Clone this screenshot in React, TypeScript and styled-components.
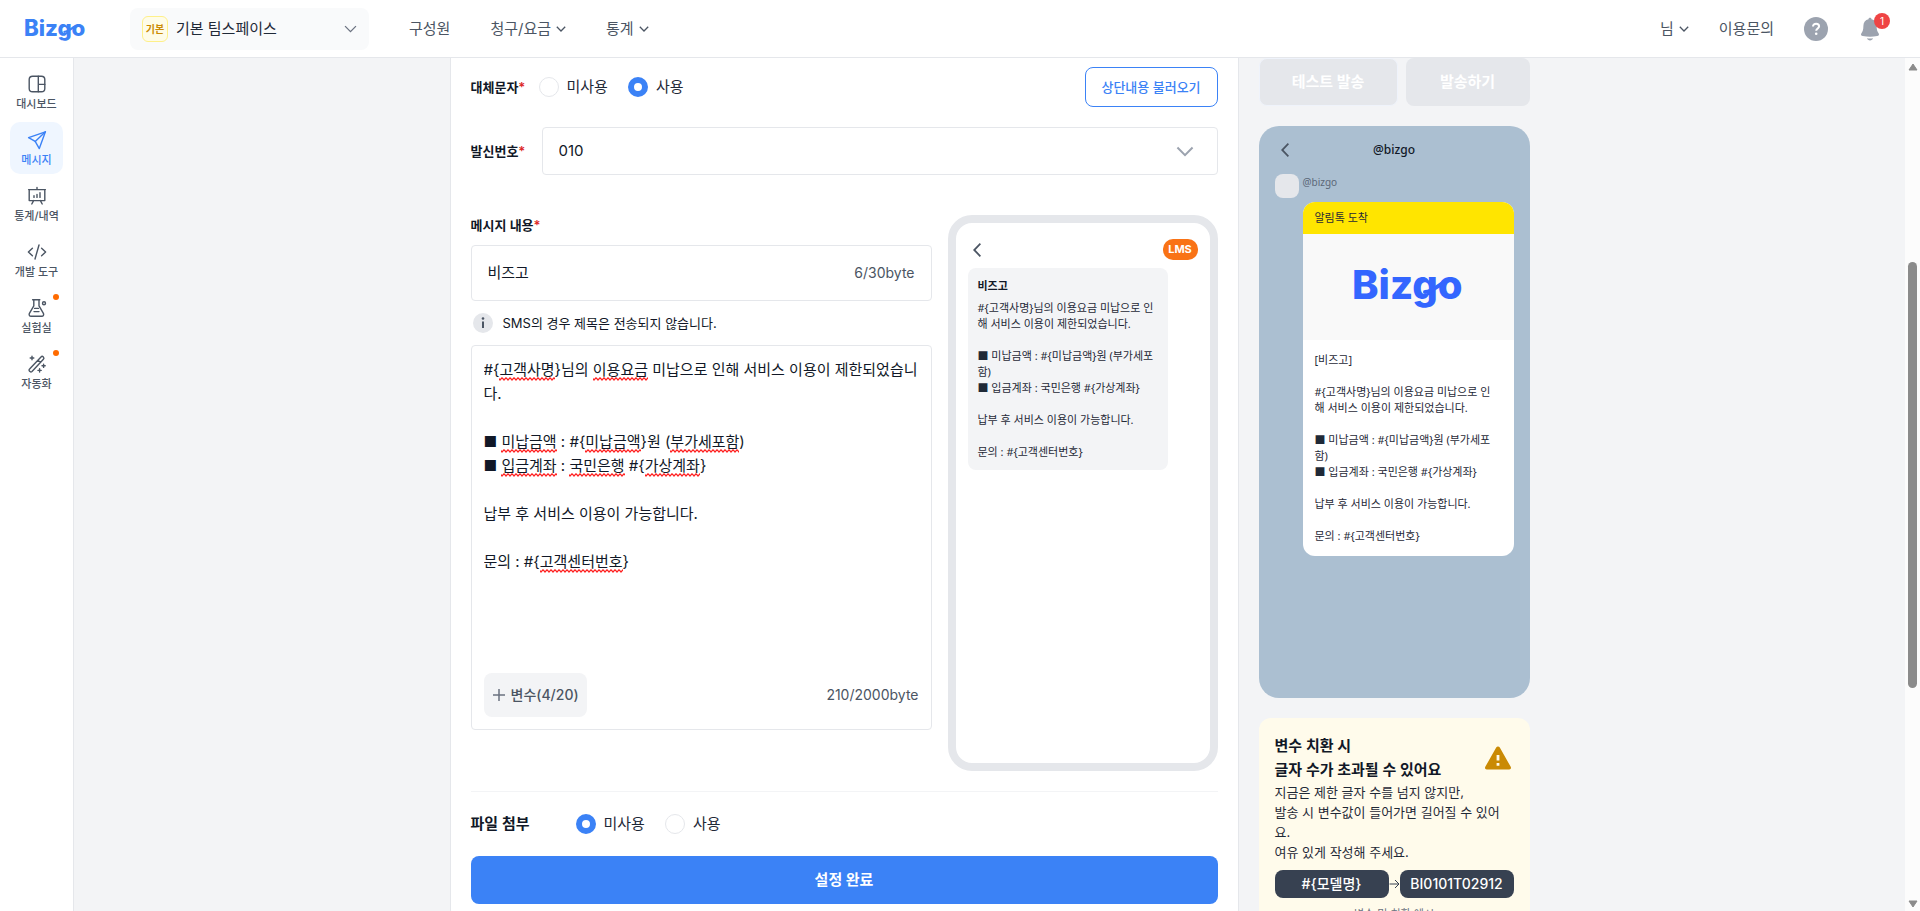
import React, { useState } from 'react';
import styled, { createGlobalStyle, css } from 'styled-components';

const sans = `Inter, "Noto Sans CJK KR", sans-serif`;
const preview = `"Noto Sans", "Noto Sans CJK KR", sans-serif`;

const GlobalStyle = createGlobalStyle`
  *, *::before, *::after { box-sizing: border-box; }
  body { margin: 0; background: #fff; color: #111827; font-family: ${sans}; font-size: 15px; line-height: 24px; }
  button, input, select, textarea { font: inherit; color: inherit; margin: 0; }
  button { cursor: pointer; }
  a { color: inherit; text-decoration: none; }
  p, h2 { margin: 0; }
  svg { display: block; flex: none; }
`;

const Shell = styled.div`
  display: flex;
  flex-direction: column;
  height: 100vh;
  overflow: hidden;
`;

const Header = styled.header`
  display: flex;
  align-items: center;
  flex: none;
  height: 58px;
  padding: 0 38px 0 24px;
  border-bottom: 1px solid #e5e7eb;
  background: #fff;
  color: #4b5563;
`;

const TeamButton = styled.button`
  display: flex;
  align-items: center;
  gap: 8px;
  width: 239px;
  height: 42px;
  margin-left: 44px;
  padding: 0 12px;
  border: 0;
  border-radius: 8px;
  background: #f9fafb;
  color: #1f2937;
  text-align: left;
`;

const TeamName = styled.span`
  flex: 1;
`;

const TeamBadge = styled.span`
  width: 26px;
  height: 26px;
  border: 1px solid #fef08a;
  border-radius: 6px;
  background: #fefce8;
  color: #ca8a04;
  font-size: 10px;
  font-weight: 700;
  line-height: 24px;
  text-align: center;
`;

const Nav = styled.nav`
  display: flex;
  align-items: center;
  gap: 40px;
  flex: 1;
  margin-left: 40px;
`;

const NavLink = styled.a`
  display: flex;
  align-items: center;
  gap: 5px;
`;

const Tools = styled.div`
  display: flex;
  align-items: center;
  gap: 30px;
`;

const IconButton = styled.button`
  position: relative;
  padding: 0;
  border: 0;
  background: none;
`;

const Count = styled.span`
  position: absolute;
  top: -4px;
  right: -8px;
  width: 16px;
  height: 16px;
  border-radius: 8px;
  background: #ef4444;
  color: #fff;
  font-size: 10px;
  line-height: 16px;
  text-align: center;
`;

const Body = styled.div`
  display: flex;
  flex: 1;
  min-height: 0;
`;

const Sidebar = styled.nav`
  display: flex;
  flex-direction: column;
  gap: 4px;
  flex: none;
  width: 74px;
  padding: 8px 10px;
  border-right: 1px solid #e5e7eb;
`;

const SideItem = styled.a<{ $active?: boolean }>`
  position: relative;
  display: flex;
  flex-direction: column;
  align-items: center;
  height: 52px;
  padding-top: 8px;
  border-radius: 10px;
  background: ${(p) => (p.$active ? '#eff6ff' : 'transparent')};
  color: ${(p) => (p.$active ? '#3b82f6' : '#4b5563')};
  font-size: 11px;
  font-weight: 500;
  line-height: 20px;
  white-space: nowrap;
`;

const Dot = styled.span`
  position: absolute;
  top: 4px;
  right: 4px;
  width: 6px;
  height: 6px;
  border-radius: 50%;
  background: #ff6b00;
`;

const Main = styled.main`
  flex: 1;
  min-width: 0;
  overflow: hidden;
  background: #f3f4f6;
`;

const Columns = styled.div`
  display: flex;
  align-items: flex-start;
  gap: 20px;
  max-width: 1080px;
  margin: 0 auto;
`;

const FormCard = styled.form`
  flex: 1;
  min-width: 0;
  padding: 9px 20px 20px;
  border: 1px solid #e5e7eb;
  border-top: 0;
  border-radius: 0 0 16px 16px;
  background: #fff;
`;

const Row = styled.div`
  display: flex;
  align-items: center;
`;

const Label = styled.label`
  color: #111827;
  font-size: 13px;
  font-weight: 600;
  line-height: 20px;
`;

const FieldName = styled(Label).attrs({ as: 'span' })`
  width: 68px;
`;

const SectionName = styled(Label).attrs({ as: 'span' })`
  width: 105px;
  font-size: 15px;
`;

const Required = styled.span`
  color: #dc2626;
`;

const RadioGroup = styled.div`
  display: flex;
  gap: 20px;
  flex: 1;
`;

const RadioLabel = styled.label`
  display: flex;
  align-items: center;
  gap: 8px;
  color: #1f2937;
`;

const Radio = styled.input.attrs({ type: 'radio' })`
  appearance: none;
  width: 20px;
  height: 20px;
  border: 1px solid #e5e7eb;
  border-radius: 50%;
  background: #fff;

  &:checked {
    border: 6px solid #3b82f6;
  }
`;

const OutlineButton = styled.button`
  width: 133px;
  height: 40px;
  padding: 0;
  border: 1px solid #3b82f6;
  border-radius: 8px;
  background: #fff;
  color: #3b82f6;
  font-size: 13px;
  font-weight: 500;
`;

const SenderRow = styled(Row)`
  margin-top: 20px;
`;

const SenderLabel = styled(Label)`
  width: 71px;
`;

const SelectBox = styled.div`
  display: grid;
  flex: 1;
  align-items: center;

  > * {
    grid-area: 1 / 1;
  }
  > svg {
    justify-self: end;
    margin-right: 24px;
    pointer-events: none;
  }
`;

const Select = styled.select`
  appearance: none;
  width: 100%;
  height: 48px;
  padding: 0 16px;
  border: 1px solid #e5e7eb;
  border-radius: 4px;
  background: #fff;
  font-size: 15px;
`;

const MessageArea = styled.div`
  display: flex;
  align-items: flex-start;
  gap: 16px;
  margin-top: 40px;
`;

const MessageFields = styled.div`
  display: flex;
  flex-direction: column;
  flex: 1;
  min-width: 0;
`;

const fieldBox = css`
  border: 1px solid #e5e7eb;
  border-radius: 4px;
  background: #fff;
`;

const TitleBox = styled.div`
  ${fieldBox}
  display: flex;
  align-items: center;
  height: 56px;
  margin-top: 10px;
  padding: 0 16px;
`;

const TitleInput = styled.input`
  flex: 1;
  min-width: 0;
  padding: 0;
  border: 0;
  outline: 0;
  background: none;
`;

const Bytes = styled.span`
  color: #4b5563;
  font-size: 14px;
`;

const Hint = styled.p`
  display: flex;
  align-items: center;
  gap: 10px;
  margin: 12px 0 12px 2px;
  font-size: 13px;
  line-height: 20px;
`;

const ContentBox = styled.div`
  ${fieldBox}
  display: flex;
  flex-direction: column;
  height: 385px;
  padding: 12px;
`;

const Editor = styled.div`
  display: grid;
  flex: 1;
  min-height: 0;

  > * {
    grid-area: 1 / 1;
  }
`;

const editorText = css`
  width: 100%;
  padding: 0;
  font-family: ${sans};
  font-size: 15px;
  line-height: 24px;
  white-space: pre-wrap;
  word-break: break-all;
`;

/* Hidden copy of the text that only carries the spelling marks under the textarea. */
const SpellingLayer = styled.div`
  ${editorText}
  visibility: hidden;
`;

const Misspelled = styled.span`
  position: relative;

  &::after {
    content: '';
    visibility: visible;
    position: absolute;
    left: 0;
    right: 0;
    bottom: -2px;
    height: 4px;
    background: url("data:image/svg+xml,%3Csvg xmlns='http://www.w3.org/2000/svg' width='4' height='4'%3E%3Cpath d='M-1 .5 1 3 3 .8 5 3' fill='none' stroke='%23ff2020' stroke-width='1.2'/%3E%3C/svg%3E") repeat-x;
  }
`;

const EditorInput = styled.textarea`
  ${editorText}
  position: relative;
  height: 100%;
  border: 0;
  outline: 0;
  resize: none;
  overflow: hidden;
  background: none;
`;

const ContentFooter = styled.div`
  display: flex;
  align-items: center;
  justify-content: space-between;
`;

const VariableButton = styled.button`
  display: flex;
  align-items: center;
  gap: 5px;
  height: 44px;
  padding: 0 8px;
  border: 0;
  border-radius: 8px;
  background: #f3f4f6;
  color: #4b5563;
  font-size: 14px;
  font-weight: 500;
`;

const LmsPhone = styled.section`
  flex: none;
  width: 270px;
  height: 556px;
  padding: 16px 12px;
  border: 8px solid #e5e7eb;
  border-radius: 24px;
  background: #fff;
`;

const LmsHead = styled.div`
  display: flex;
  align-items: center;
  justify-content: space-between;
  padding-left: 5px;
`;

const LmsTag = styled.span`
  width: 35px;
  height: 21px;
  border-radius: 10px;
  background: #f97316;
  color: #fff;
  font-size: 11px;
  font-weight: 700;
  line-height: 20px;
  text-align: center;
`;

const LmsBubble = styled.div`
  width: 200px;
  margin-top: 8px;
  padding: 10px;
  border-radius: 8px;
  background: #f3f4f6;
  color: #1f2937;
`;

const LmsTitle = styled.h2`
  margin-bottom: 6px;
  color: #111827;
  font-family: ${preview};
  font-size: 11px;
  font-weight: 600;
  line-height: 16px;
`;

const PreviewText = styled.p`
  font-family: ${preview};
  font-size: 11px;
  line-height: 16px;
  white-space: pre;
`;

const Divider = styled.hr`
  height: 1px;
  margin: 20px 0;
  border: 0;
  background: #f3f4f6;
`;

const SubmitButton = styled.button`
  width: 100%;
  height: 48px;
  margin-top: 20px;
  border: 0;
  border-radius: 8px;
  background: #3b82f6;
  color: #fff;
  font-weight: 700;
`;

const Side = styled.aside`
  display: flex;
  flex-direction: column;
  gap: 20px;
  flex: none;
  width: 271px;
`;

const SendButtons = styled.div`
  display: flex;
  gap: 8px;
`;

const SendButton = styled.button<{ $framed?: boolean }>`
  flex: ${(p) => (p.$framed ? '0 0 139px' : '1')};
  height: 48px;
  padding: 0;
  border: ${(p) => (p.$framed ? '1px solid #eff3fb' : '0')};
  border-radius: 8px;
  background: #e5e7eb;
  color: #fff;
  font-weight: 700;
`;

const TalkPhone = styled.section`
  height: 572px;
  padding: 16px;
  border-radius: 20px;
  background: #abbfd1;
  font-family: ${preview};
`;

const TalkHead = styled.div`
  display: grid;
  grid-template-columns: 20px 1fr 20px;
  align-items: center;
  justify-items: center;
  height: 16px;
  margin-bottom: 16px;
  font-size: 12px;
  font-weight: 500;
  line-height: 16px;
`;

const TalkBody = styled.div`
  display: grid;
  grid-template-columns: 24px 1fr;
  column-gap: 4px;
`;

const Avatar = styled.span`
  height: 24px;
  border-radius: 8px;
  background: #e5e7eb;
`;

const TalkName = styled.span`
  height: 28px;
  color: #5b6878;
  font-size: 10px;
  line-height: 16px;
`;

const TalkBubble = styled.div`
  grid-column: 2;
  border-radius: 12px;
  overflow: hidden;
  background: #fff;
  color: #1f2937;
`;

const TalkNotice = styled.p`
  padding: 0 12px;
  background: #ffe500;
  font-size: 11px;
  line-height: 32px;
`;

const TalkImage = styled.div`
  display: flex;
  align-items: center;
  justify-content: center;
  height: 106px;
  background: #f9f9f9;
`;

const TalkText = styled(PreviewText)`
  padding: 12px;
`;

const Tip = styled.section`
  padding: 16px;
  border-radius: 12px;
  background: #fffbeb;
  font-size: 13px;
  line-height: 20px;
  color: #1f2937;
`;

const TipHead = styled.div`
  display: flex;
  align-items: center;
  justify-content: space-between;
  padding-right: 2px;
`;

const TipTitle = styled.h2`
  color: #111827;
  font-size: 15px;
  font-weight: 600;
  line-height: 24px;
`;

const Example = styled.div`
  display: flex;
  align-items: center;
  margin-top: 8px;
  color: #374151;
`;

const Pill = styled.span`
  flex: 1;
  height: 28px;
  border-radius: 8px;
  background: #374151;
  color: #fff;
  font-size: 14px;
  font-weight: 500;
  line-height: 28px;
  text-align: center;
`;

const Caption = styled.p`
  margin-top: 8px;
  color: #6b7280;
  font-size: 11px;
  line-height: 16px;
  text-align: center;
`;

const ScrollTrack = styled.div`
  display: flex;
  flex-direction: column;
  align-items: center;
  justify-content: space-between;
  flex: none;
  width: 15px;
  padding: 5px 0 3px;
  background: #fcfcfc;
`;

const ScrollRail = styled.div`
  display: grid;
  grid-template-rows: 190fr 423fr 210fr;
  flex: 1;
  width: 9px;
`;

const ScrollThumb = styled.div`
  grid-row: 2;
  border-radius: 5px;
  background: #8b8b8b;
`;

const Chevron = ({ size = 10, color = '#4b5563', weight = 1.3 }: { size?: number; color?: string; weight?: number }) => (
  <svg width={size} height={Math.round(size * 0.6)} viewBox="0 0 10 6" fill="none" stroke={color} strokeWidth={weight} aria-hidden="true">
    <path d="M0.8 0.8 5 5 9.200 0.800" vectorEffect="non-scaling-stroke" />
  </svg>
);

const Back = () => (
  <svg width="8" height="14" viewBox="0 0 8 14" fill="none" stroke="#4b5563" strokeWidth="1.8" aria-hidden="true">
    <path d="M7.4 0.7 1.2 7l6.2 6.3" />
  </svg>
);

const Logo = ({ width, color }: { width: number; color: string }) => (
  <svg width={width} height={Math.round(width * 0.49)} viewBox="0 0 110 54" role="img" aria-label="Bizgo">
    <text x="-1" y="39" fill={color} fontFamily="Inter, sans-serif" fontWeight="800" fontSize="40">Bizgo</text>
    <path d="M72 32c6 0 10-4 18-9" fill="none" stroke={color} strokeWidth="4" strokeLinecap="round" />
  </svg>
);

const stroke = { fill: 'none', stroke: 'currentColor', strokeWidth: 1.4, strokeLinecap: 'round', strokeLinejoin: 'round' } as const;

const icons: Record<string, React.ReactNode> = {
  dashboard: <><rect x="2.2" y="2.2" width="15.6" height="15.6" rx="3.4" /><path d="M11.3 2.2v15.6M11.3 10.4h6.5" /></>,
  message: <><path d="M18.4 1.8 1.6 7.7 8.2 11.4 12.3 18.6 18.4 1.8z" /><path d="M8.2 11.4 18.4 1.8" /></>,
  stats: <><path d="M2.2 3.6h15.6v11H2.2zM1.6 3.6h16.8M10 1.4v2.2M6.6 14.6l-1.8 3.4M13.4 14.6l1.8 3.4" /><path d="M7 11.4V9.8M10 11.4V8.4M13 11.4V6.6" /></>,
  dev: <><path d="M5.4 6.2 1.4 10l4 3.8M14.6 6.2l4 3.8-4 3.8M12 3 8 17" /></>,
  lab: <><path d="M5.6 1.8h7.2M6.8 1.8v6L2.4 15.4c-.7 1.4.1 2.8 1.6 2.8h10.8c1.5 0 2.3-1.4 1.6-2.8L12 7.8v-6M7.6 10.4h3.8M7 13.6h5" /><circle cx="17" cy="5.2" r="1.5" /></>,
  auto: <><path d="M2.6 15 14 2.9c1.5-1.5 3.9.8 2.4 2.4L5 17.4c-1.6 1.5-4-.8-2.4-2.4zM11 6.2l2.4 2.4M5 2.2v3.6M3.2 4h3.6M16.6 10.2v3.2M15 11.8h3.2M12.6 14.8v3.2M11 16.4h3.2" /></>,
};

const SideIcon = ({ name }: { name: string }) => (
  <svg width="20" height="20" viewBox="0 0 20 20" {...stroke} aria-hidden="true">{icons[name]}</svg>
);

const menu = [
  { icon: 'dashboard', text: '대시보드' },
  { icon: 'message', text: '메시지', active: true },
  { icon: 'stats', text: '통계/내역' },
  { icon: 'dev', text: '개발 도구' },
  { icon: 'lab', text: '실험실', dot: true },
  { icon: 'auto', text: '자동화', dot: true },
];

const initialBody = `#{고객사명}님의 이용요금 미납으로 인해 서비스 이용이 제한되었습니다.

■ 미납금액 : #{미납금액}원 (부가세포함)
■ 입금계좌 : 국민은행 #{가상계좌}

납부 후 서비스 이용이 가능합니다.

문의 : #{고객센터번호}`;

const previewBody = `#{고객사명}님의 이용요금 미납으로 인
해 서비스 이용이 제한되었습니다.

■ 미납금액 : #{미납금액}원 (부가세포
함)
■ 입금계좌 : 국민은행 #{가상계좌}

납부 후 서비스 이용이 가능합니다.

문의 : #{고객센터번호}`;

const flagged = /(고객사명|이용요금|미납금액|부가세포함|입금계좌|국민은행|가상계좌|고객센터번호)/;

export default function App() {
  const [fallback, setFallback] = useState('on');
  const [file, setFile] = useState('off');
  const [title, setTitle] = useState('비즈고');
  const [body, setBody] = useState(initialBody);

  return (
    <Shell>
      <GlobalStyle />
      <Header>
        <a href="#home"><Logo width={62} color="#3b82f6" /></a>
        <TeamButton type="button">
          <TeamBadge>기본</TeamBadge>
          <TeamName>기본 팀스페이스</TeamName>
          <Chevron size={13} color="#6b7280" />
        </TeamButton>
        <Nav>
          <NavLink href="#members">구성원</NavLink>
          <NavLink href="#billing">청구/요금 <Chevron /></NavLink>
          <NavLink href="#stats">통계 <Chevron /></NavLink>
        </Nav>
        <Tools>
          <NavLink href="#me">님 <Chevron /></NavLink>
          <NavLink href="#help">이용문의</NavLink>
          <IconButton type="button" aria-label="도움말">
            <svg width="24" height="24" viewBox="0 0 24 24">
              <circle cx="12" cy="12" r="12" fill="#9ca3af" />
              <path d="M9 9.6c0-1.8 1.3-2.9 3.1-2.9 1.7 0 3 1 3 2.6 0 2.1-2.9 2.2-2.9 4.5" fill="none" stroke="#fff" strokeWidth="2" />
              <circle cx="12.2" cy="16.8" r="1.3" fill="#fff" />
            </svg>
          </IconButton>
          <IconButton type="button" aria-label="알림">
            <svg width="24" height="24" viewBox="0 0 24 24" fill="#9ca3af">
              <path d="M12 .8c.9 0 1.5.6 1.5 1.4 3.2.7 5.1 3.3 5.1 6.6 0 4.2.8 6 2 7.4.9 1.1.3 2.8-1.400 2.900-4.800.8-9.600.8-14.400 0-1.700-.1-2.300-1.800-1.400-2.900 1.200-1.400 2-3.200 2-7.400 0-3.300 1.900-5.900 5.100-6.600 0-.8.6-1.400 1.500-1.400z" />
              <path d="M9 21.2c2 .3 4 .3 6 0-.5 1.3-1.5 2.2-3 2.2s-2.500-.9-3-2.200z" />
            </svg>
            <Count>1</Count>
          </IconButton>
        </Tools>
      </Header>

      <Body>
        <Sidebar>
          {menu.map((m) => (
            <SideItem key={m.icon} href={`#${m.icon}`} $active={m.active}>
              <SideIcon name={m.icon} />
              {m.text}
              {m.dot && <Dot />}
            </SideItem>
          ))}
        </Sidebar>

        <Main>
          <Columns>
            <FormCard onSubmit={(e) => e.preventDefault()}>
              <Row>
                <FieldName>대체문자<Required>*</Required></FieldName>
                <RadioGroup role="radiogroup" aria-label="대체문자">
                  <RadioLabel><Radio name="fallback" checked={fallback === 'off'} onChange={() => setFallback('off')} />미사용</RadioLabel>
                  <RadioLabel><Radio name="fallback" checked={fallback === 'on'} onChange={() => setFallback('on')} />사용</RadioLabel>
                </RadioGroup>
                <OutlineButton type="button">상단내용 불러오기</OutlineButton>
              </Row>

              <SenderRow>
                <SenderLabel htmlFor="sender">발신번호<Required>*</Required></SenderLabel>
                <SelectBox>
                  <Select id="sender"><option>010</option></Select>
                  <Chevron size={18} color="#9ca3af" weight={2} />
                </SelectBox>
              </SenderRow>

              <MessageArea>
                <MessageFields>
                  <Label htmlFor="title">메시지 내용<Required>*</Required></Label>
                  <TitleBox>
                    <TitleInput id="title" value={title} onChange={(e) => setTitle(e.target.value)} />
                    <Bytes>6/30byte</Bytes>
                  </TitleBox>
                  <Hint>
                    <svg width="20" height="20" viewBox="0 0 20 20" aria-hidden="true">
                      <circle cx="10" cy="10" r="10" fill="#e5e7eb" />
                      <path d="M10 8.5v6.5" stroke="#4b5563" strokeWidth="2" />
                      <circle cx="10" cy="5.5" r="1.3" fill="#4b5563" />
                    </svg>
                    SMS의 경우 제목은 전송되지 않습니다.
                  </Hint>
                  <ContentBox>
                    <Editor>
                      <SpellingLayer aria-hidden="true">
                        {body.split(flagged).map((part, i) => (flagged.test(part) ? <Misspelled key={i}>{part}</Misspelled> : part))}
                      </SpellingLayer>
                      <EditorInput aria-label="메시지 내용" spellCheck={false} value={body} onChange={(e) => setBody(e.target.value)} />
                    </Editor>
                    <ContentFooter>
                      <VariableButton type="button">
                        <svg width="14" height="14" viewBox="0 0 14 14" stroke="#6b7280" strokeWidth="1.5" aria-hidden="true"><path d="M7 1v12M1 7h12" /></svg>
                        변수(4/20)
                      </VariableButton>
                      <Bytes>210/2000byte</Bytes>
                    </ContentFooter>
                  </ContentBox>
                </MessageFields>

                <LmsPhone aria-label="문자 미리보기">
                  <LmsHead><Back /><LmsTag>LMS</LmsTag></LmsHead>
                  <LmsBubble>
                    <LmsTitle>{title}</LmsTitle>
                    <PreviewText>{previewBody}</PreviewText>
                  </LmsBubble>
                </LmsPhone>
              </MessageArea>

              <Divider />
              <Row>
                <SectionName>파일 첨부</SectionName>
                <RadioGroup role="radiogroup" aria-label="파일 첨부">
                  <RadioLabel><Radio name="file" checked={file === 'off'} onChange={() => setFile('off')} />미사용</RadioLabel>
                  <RadioLabel><Radio name="file" checked={file === 'on'} onChange={() => setFile('on')} />사용</RadioLabel>
                </RadioGroup>
              </Row>
              <SubmitButton type="submit">설정 완료</SubmitButton>
            </FormCard>

            <Side>
              <SendButtons>
                <SendButton type="button" $framed>테스트 발송</SendButton>
                <SendButton type="button">발송하기</SendButton>
              </SendButtons>
              <TalkPhone aria-label="알림톡 미리보기">
                <TalkHead><Back /><span>@bizgo</span></TalkHead>
                <TalkBody>
                  <Avatar />
                  <TalkName>@bizgo</TalkName>
                  <TalkBubble>
                    <TalkNotice>알림톡 도착</TalkNotice>
                    <TalkImage><Logo width={110} color="#3366ff" /></TalkImage>
                    <TalkText>{`[비즈고]\n\n${previewBody}`}</TalkText>
                  </TalkBubble>
                </TalkBody>
              </TalkPhone>
              <Tip>
                <TipHead>
                  <TipTitle>변수 치환 시<br />글자 수가 초과될 수 있어요</TipTitle>
                  <svg width="28" height="24" viewBox="0 0 28 24" aria-hidden="true">
                    <path d="M12.2 1.5c.8-1.3 2.8-1.3 3.6 0l10.900 19.300c.7 1.200 0 2.700-1.500 2.700H2.800c-1.500 0-2.200-1.500-1.500-2.700z" fill="#ca8a04" />
                    <path d="M14 9v5.400M14 17v2.800" stroke="#fffbeb" strokeWidth="2.8" />
                  </svg>
                </TipHead>
                <p>지금은 제한 글자 수를 넘지 않지만,<br />발송 시 변수값이 들어가면 길어질 수 있어<br />요.<br />여유 있게 작성해 주세요.</p>
                <Example>
                  <Pill>{'#{모델명}'}</Pill>
                  <svg width="11" height="10" viewBox="0 0 11 10" fill="none" stroke="currentColor" aria-hidden="true"><path d="M0.5 5h9.5M6 1l4 4-4 4" /></svg>
                  <Pill>BI0101T02912</Pill>
                </Example>
                <Caption>변수 및 치환 예시</Caption>
              </Tip>
            </Side>
          </Columns>
        </Main>

        <ScrollTrack aria-hidden="true">
          <svg width="10" height="8" viewBox="0 0 10 8"><path d="M5 1 9 7H1z" fill="#8b8b8b" stroke="#8b8b8b" strokeLinejoin="round" /></svg>
          <ScrollRail><ScrollThumb /></ScrollRail>
          <svg width="10" height="8" viewBox="0 0 10 8"><path d="M5 7 9 1H1z" fill="#8b8b8b" stroke="#8b8b8b" strokeLinejoin="round" /></svg>
        </ScrollTrack>
      </Body>
    </Shell>
  );
}
